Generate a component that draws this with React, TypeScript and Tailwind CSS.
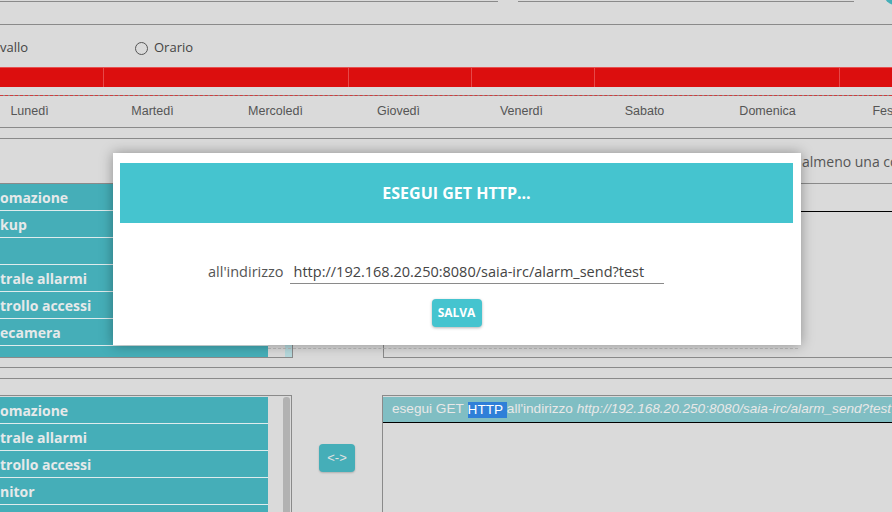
const days = ["Lunedì", "Martedì", "Mercoledì", "Giovedì", "Venerdì", "Sabato", "Domenica", "Festivi"];
const topItems = ["omazione", "kup", "", "trale allarmi", "trollo accessi", "ecamera", ""];
const bottomItems = ["omazione", "trale allarmi", "trollo accessi", "nitor", ""];

function ListItems({ items }: { items: string[] }) {
  return (
    <div className="flex w-[268px] shrink-0 flex-col">
      {items.map((it, i) => (
        <div
          key={i}
          className="flex h-[27px] shrink-0 items-center whitespace-nowrap border-b border-[#dfeced] bg-[#45aeb8] text-[14px] font-bold text-[#e6e9ea]"
        >
          {it}
        </div>
      ))}
    </div>
  );
}

export default function App() {
  return (
    <div className="relative flex h-[512px] w-[892px] flex-col overflow-hidden bg-[#dadada] font-['Open_Sans',sans-serif] text-[#555]">
      {/* top inputs */}
      <div className="flex h-[25px] shrink-0 border-b border-[#8a8a8a]">
        <div className="h-[2px] w-[498px] shrink-0 border-b border-[#8a8a8a]" />
        <div className="w-[20px] shrink-0" />
        <div className="h-[2px] w-[336px] shrink-0 border-b border-[#8a8a8a]" />
        <div className="ml-[29px] -mt-[21px] h-[26px] w-[26px] shrink-0 rounded-full bg-[#45aeb8]" />
      </div>

      {/* radio row */}
      <div className="flex h-[42px] shrink-0 items-center pt-[4px] text-[13px] text-[#444]">
        <span className="w-[135px] shrink-0">vallo</span>
        <span className="h-[13px] w-[13px] shrink-0 rounded-full border-[1.5px] border-[#555]" />
        <span className="ml-[6px]">Orario</span>
      </div>

      {/* red timeline */}
      <div className="flex h-[20px] shrink-0 border-t border-[#e65050] bg-[#dc0e0e]">
        <div className="w-[104px] shrink-0 border-r border-[#e64848]" />
        <div className="w-[245px] shrink-0 border-r border-[#e64848]" />
        <div className="w-[123px] shrink-0 border-r border-[#e64848]" />
        <div className="w-[123px] shrink-0 border-r border-[#e64848]" />
        <div className="w-[245px] shrink-0 border-r border-[#e64848]" />
        <div className="flex-1" />
      </div>
      <div className="h-[8px] shrink-0" />
      <div className="h-0 shrink-0 border-t border-dashed border-[#d43a3a] bg-[#8a8a8a]" />

      {/* days */}
      <div className="flex h-[32px] shrink-0 items-center border-b border-[#8a8a8a] font-['Liberation_Sans',Arial,sans-serif] text-[12.5px] text-[#555]">
        <div className="-ml-[32px] flex">
          {days.map((d) => (
            <div key={d} className="w-[123px] shrink-0 text-center">
              {d}
            </div>
          ))}
        </div>
      </div>
      <div className="h-[11px] shrink-0 border-b border-[#8a8a8a]" />

      {/* hint row */}
      <div className="flex h-[44px] shrink-0 items-center whitespace-nowrap pl-[802px] text-[14px] text-[#555]">
        almeno una condizione
      </div>

      {/* top lists */}
      <div className="flex h-[175px] shrink-0">
        <div className="flex w-[293px] shrink-0 overflow-hidden border-y border-r border-[#8a8a8a]">
          <ListItems items={topItems} />
          <div className="flex flex-1 items-end pl-[17px]">
            <div className="h-[60px] w-[7px] rounded-t-[3px] bg-[#b5d8dc]" />
          </div>
        </div>
        <div className="w-[90px] shrink-0" />
        <div className="flex flex-1 flex-col border-y border-l border-[#8a8a8a]">
          <div className="h-[28px] border-b border-black" />
        </div>
      </div>

      <div className="h-[10px] shrink-0 border-b border-[#8a8a8a]" />
      <div className="h-[11px] shrink-0 border-b border-[#8a8a8a]" />
      <div className="h-[16px] shrink-0" />

      {/* bottom lists */}
      <div className="flex flex-1">
        <div className="flex w-[292px] shrink-0 overflow-hidden border-t border-r border-[#8a8a8a] pt-px">
          <ListItems items={bottomItems} />
          <div className="flex flex-1 pl-[15px]">
            <div className="h-[200px] w-[7px] rounded-t-[3px] bg-[#b2b2b2]" />
          </div>
        </div>
        <div className="w-[90px] shrink-0 pl-[27px] pt-[49px]">
          <button className="h-[28px] w-[36px] rounded-[4px] bg-[#45aeb8] font-['Liberation_Sans',Arial,sans-serif] text-[13px] text-[#e2e2e2] shadow-[0_1px_2px_rgba(0,0,0,0.2)]">
            {"<->"}
          </button>
        </div>
        <div className="flex flex-1 flex-col overflow-hidden border-t border-l border-[#8a8a8a] pt-px">
          <div className="flex h-[26px] items-center whitespace-nowrap border-b border-black bg-[#80bec3] pl-[9px] font-['Liberation_Sans',Arial,sans-serif] text-[13.6px] text-[#e8e8e8]">
            <span>esegui GET&nbsp;</span>
            <span className="bg-[#2f7fd8] leading-[16px] text-white">HTTP&nbsp;</span>
            <span>all'indirizzo&nbsp;</span>
            <span className="italic">http://192.168.20.250:8080/saia-irc/alarm_send?test</span>
          </div>
        </div>
      </div>

      {/* dashed trace under dialog */}
      <div className="absolute left-[268px] top-[348px] w-[530px] border-t border-dashed border-[#bcbcbc]" />

      {/* dialog */}
      <div className="absolute left-[113px] top-[153px] flex h-[192px] w-[688px] flex-col bg-white pl-[7px] pr-[8px] pt-[10px] shadow-[0_0_12px_rgba(0,0,0,0.35)]">
        <div className="flex h-[60px] items-center justify-center bg-[#45c4cf] text-[16px] font-bold text-white">
          ESEGUI GET HTTP...
        </div>
        <div className="mt-[37px] flex items-center pl-[88px]">
          <span className="mr-[6px] text-[14.5px] text-[#555]">all'indirizzo</span>
          <div className="flex h-[24px] w-[374px] items-center border-b border-[#8a8a8a] pl-[4px] text-[14.5px] text-[#444]">
            http://192.168.20.250:8080/saia-irc/alarm_send?test
          </div>
        </div>
        <div className="mt-[15px] flex justify-center">
          <button className="h-[28px] w-[50px] rounded-[4px] bg-[#45c4cf] text-[12px] font-bold text-white shadow-[0_1px_3px_rgba(0,0,0,0.3)]">
            SALVA
          </button>
        </div>
      </div>
    </div>
  );
}
